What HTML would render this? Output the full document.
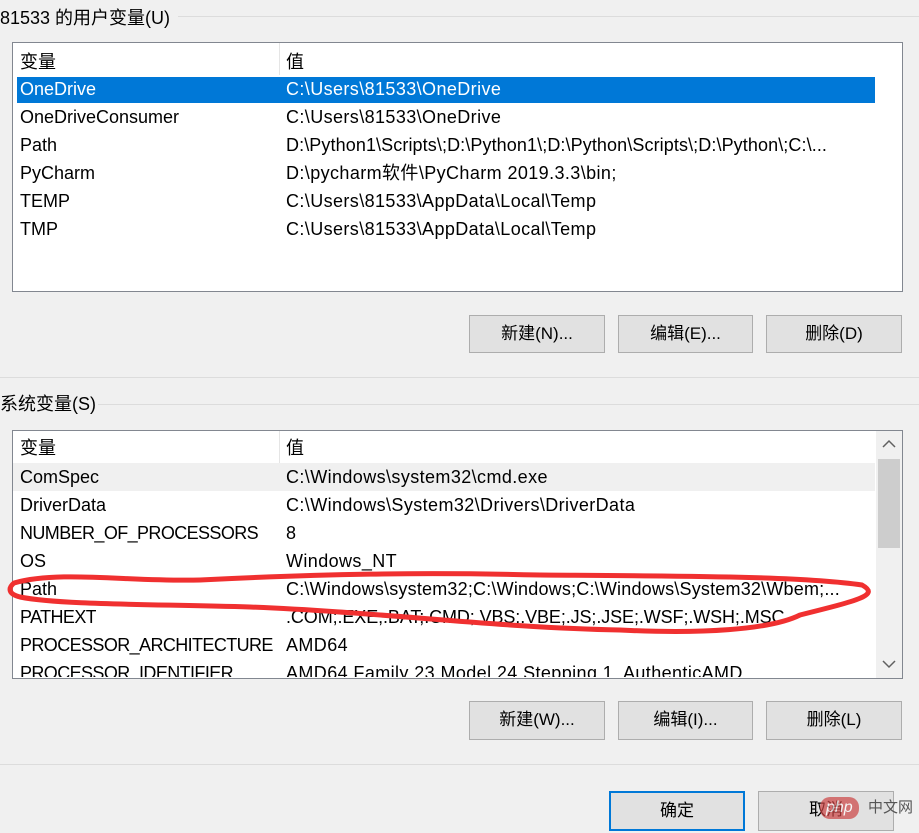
<!DOCTYPE html><html><head><meta charset="utf-8"><style>
body{margin:0;width:919px;height:833px;background:#f0f0f0;position:relative;overflow:hidden;font-family:"Liberation Sans","Noto Sans CJK SC",sans-serif;font-size:18px;line-height:22px;color:#000}
.a{position:absolute;white-space:nowrap}
.n{position:absolute;white-space:nowrap;font-size:18px;max-width:262px;overflow:hidden}
.c{letter-spacing:-0.6px}
.v{position:absolute;white-space:nowrap;letter-spacing:0.4px}
.box{position:absolute;background:#fff;border:1px solid #828790;overflow:hidden}
.btn{position:absolute;background:#e1e1e1;border:1px solid #adadad;text-align:center;box-sizing:border-box;line-height:36px;font-size:17px}
.hl{position:absolute;height:1px;background:#dcdcdc}
</style></head><body>
<div class="a" style="left:0;top:7px">81533 的用户变量(U)</div>
<div class="hl" style="left:178px;top:16px;width:741px"></div>
<div class="box" style="left:12px;top:42px;width:889px;height:248px">
 <div class="a" style="left:266px;top:0;width:1px;height:32px;background:#e5e5e5"></div>
 <div class="a" style="left:4px;top:34px;width:858px;height:26px;background:#0078d7"></div>
</div>
<div class="a" style="left:20px;top:51px">变量</div><div class="a" style="left:286px;top:51px">值</div>
<div class="n" style="left:20px;top:78px;color:#fff">OneDrive</div><div class="v" style="left:286px;top:78px;color:#fff">C:\Users\81533\OneDrive</div>
<div class="n" style="left:20px;top:106px">OneDriveConsumer</div><div class="v" style="left:286px;top:106px">C:\Users\81533\OneDrive</div>
<div class="n" style="left:20px;top:134px">Path</div><div class="v" style="left:286px;top:134px;letter-spacing:0.1px">D:\Python1\Scripts\;D:\Python1\;D:\Python\Scripts\;D:\Python\;C:\...</div>
<div class="n" style="left:20px;top:162px">PyCharm</div><div class="v" style="left:286px;top:162px">D:\pycharm软件\PyCharm 2019.3.3\bin;</div>
<div class="n" style="left:20px;top:190px">TEMP</div><div class="v" style="left:286px;top:190px">C:\Users\81533\AppData\Local\Temp</div>
<div class="n" style="left:20px;top:218px">TMP</div><div class="v" style="left:286px;top:218px">C:\Users\81533\AppData\Local\Temp</div>
<div class="btn" style="left:469px;top:315px;width:136px;height:38px">新建(N)...</div>
<div class="btn" style="left:618px;top:315px;width:135px;height:38px">编辑(E)...</div>
<div class="btn" style="left:766px;top:315px;width:136px;height:38px">删除(D)</div>
<div class="hl" style="left:0;top:377px;width:919px"></div>
<div class="a" style="left:0;top:393px">系统变量(S)</div>
<div class="hl" style="left:98px;top:404px;width:821px"></div>
<div class="box" style="left:12px;top:430px;width:889px;height:247px">
 <div class="a" style="left:266px;top:0;width:1px;height:32px;background:#e5e5e5"></div>
 <div class="a" style="left:0;top:32px;width:862px;height:28px;background:#f0f0f0"></div>
 <div class="a" style="left:863px;top:0;width:26px;height:247px;background:#f0f0f0"></div>
 <div class="a" style="left:865px;top:28px;width:22px;height:89px;background:#cdcdcd"></div>
 <svg class="a" style="left:868px;top:8px" width="16" height="10"><path d="M2 8 L8 2 L14 8" fill="none" stroke="#606060" stroke-width="1.5"/></svg>
 <svg class="a" style="left:868px;top:228px" width="16" height="10"><path d="M2 2 L8 8 L14 2" fill="none" stroke="#606060" stroke-width="1.5"/></svg>
</div>
<div class="a" style="left:20px;top:437px">变量</div><div class="a" style="left:286px;top:437px">值</div>
<div class="n" style="left:20px;top:466px">ComSpec</div><div class="v" style="left:286px;top:466px">C:\Windows\system32\cmd.exe</div>
<div class="n" style="left:20px;top:494px">DriverData</div><div class="v" style="left:286px;top:494px">C:\Windows\System32\Drivers\DriverData</div>
<div class="n c" style="left:20px;top:522px">NUMBER_OF_PROCESSORS</div><div class="v" style="left:286px;top:522px">8</div>
<div class="n" style="left:20px;top:550px">OS</div><div class="v" style="left:286px;top:550px">Windows_NT</div>
<div class="n" style="left:20px;top:578px">Path</div><div class="v" style="left:286px;top:578px;letter-spacing:0.2px">C:\Windows\system32;C:\Windows;C:\Windows\System32\Wbem;...</div>
<div class="n c" style="left:20px;top:606px">PATHEXT</div><div class="v" style="left:286px;top:606px;letter-spacing:-0.1px">.COM;.EXE;.BAT;.CMD;.VBS;.VBE;.JS;.JSE;.WSF;.WSH;.MSC</div>
<div class="n c" style="left:20px;top:634px">PROCESSOR_ARCHITECTURE</div><div class="v" style="left:286px;top:634px">AMD64</div>
<div class="n c" style="left:20px;top:662px;height:15px">PROCESSOR_IDENTIFIER</div><div class="v" style="left:286px;top:662px;height:15px;overflow:hidden">AMD64 Family 23 Model 24 Stepping 1, AuthenticAMD</div>
<svg class="a" style="left:0;top:0" width="919" height="833"><path d="M14 583 C60 570 130 582 200 580 C320 574 420 572 540 575 C680 576 800 576 862 585 C880 595 860 600 800 615 C770 630 700 634 620 630 C500 628 380 612 250 607 C150 604 60 605 20 597 C8 594 8 588 14 583Z" fill="none" stroke="#f03030" stroke-width="5" stroke-linejoin="round"/></svg>
<div class="btn" style="left:469px;top:701px;width:136px;height:39px">新建(W)...</div>
<div class="btn" style="left:618px;top:701px;width:135px;height:39px">编辑(I)...</div>
<div class="btn" style="left:766px;top:701px;width:136px;height:39px">删除(L)</div>
<div class="hl" style="left:0;top:764px;width:919px"></div>
<div class="btn" style="left:609px;top:791px;width:136px;height:40px;border:2px solid #0078d7">确定</div>
<div class="btn" style="left:758px;top:791px;width:136px;height:40px">取消</div>
<div class="a" style="left:820px;top:797px;font-size:16px;color:#fff;background:#c44;border-radius:10px;padding:0 6px;opacity:.7;font-style:italic">php</div>
<div class="a" style="left:868px;top:797px;font-size:15px;color:#555">中文网</div>
</body></html>
